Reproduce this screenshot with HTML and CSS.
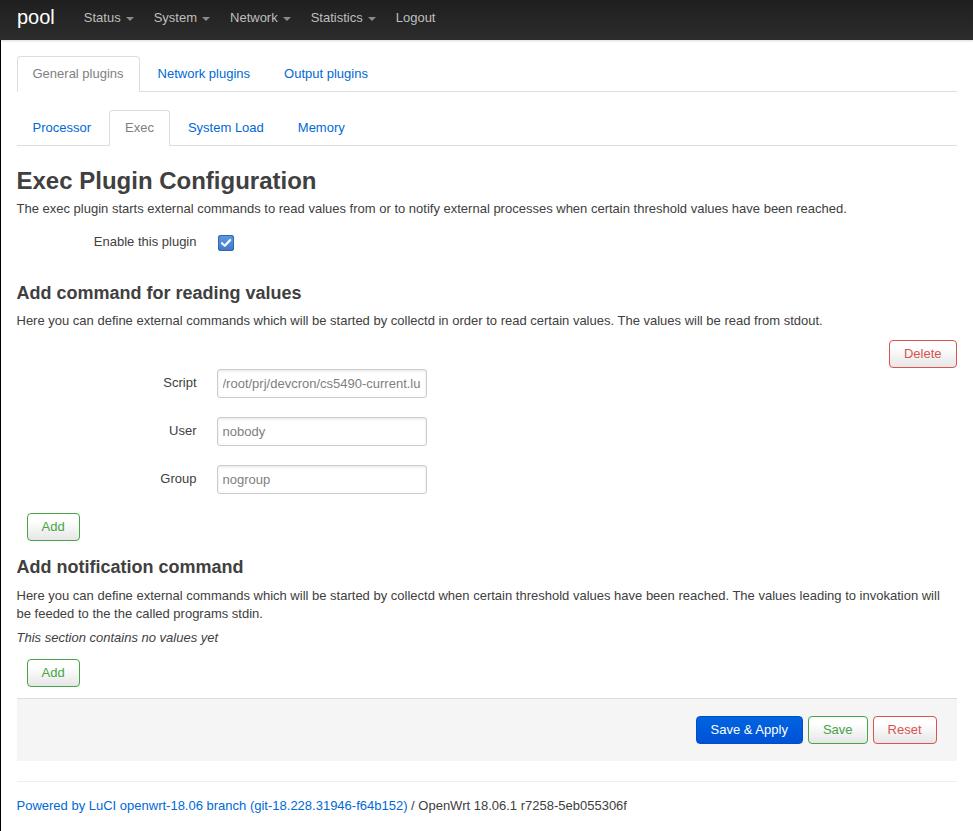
FILE: index.html
```html
<!DOCTYPE html>
<html lang="en">
<head>
<meta charset="utf-8">
<title>pool - Exec</title>
<link rel="stylesheet" href="styles.css">
</head>
<body>
<header class="topbar">
  <a class="brand" href="#">pool</a>
  <ul class="nav">
    <li><a href="#">Status<span class="caret"></span></a></li>
    <li><a href="#">System<span class="caret"></span></a></li>
    <li><a href="#">Network<span class="caret"></span></a></li>
    <li><a href="#">Statistics<span class="caret"></span></a></li>
    <li><a href="#">Logout</a></li>
  </ul>
</header>
<div class="container">
  <ul class="tabs tabs-main">
    <li class="active"><a href="#">General plugins</a></li>
    <li><a href="#">Network plugins</a></li>
    <li><a href="#">Output plugins</a></li>
  </ul>
  <ul class="tabs tabs-sub">
    <li><a href="#">Processor</a></li>
    <li class="active"><a href="#">Exec</a></li>
    <li><a href="#">System Load</a></li>
    <li><a href="#">Memory</a></li>
  </ul>

  <h2>Exec Plugin Configuration</h2>
  <p class="desc">The exec plugin starts external commands to read values from or to notify external processes when certain threshold values have been reached.</p>

  <div class="cbi-value enable-row">
    <label class="cbi-value-title">Enable this plugin</label>
    <div class="cbi-value-field">
      <span class="checkbox"><svg width="16" height="16" viewBox="0 0 16 16"><path d="M4 8.2 L6.8 10.8 L12.2 5.1" fill="none" stroke="#fff" stroke-width="2.2" stroke-linecap="round" stroke-linejoin="round"/></svg></span>
    </div>
  </div>

  <h3>Add command for reading values</h3>
  <p class="desc">Here you can define external commands which will be started by collectd in order to read certain values. The values will be read from stdout.</p>

  <div class="section-remove"><button class="btn btn-remove">Delete</button></div>

  <div class="cbi-value">
    <label class="cbi-value-title">Script</label>
    <div class="cbi-value-field"><input class="text" type="text" value="/root/prj/devcron/cs5490-current.lua"></div>
  </div>
  <div class="cbi-value">
    <label class="cbi-value-title">User</label>
    <div class="cbi-value-field"><input class="text" type="text" value="nobody"></div>
  </div>
  <div class="cbi-value last">
    <label class="cbi-value-title">Group</label>
    <div class="cbi-value-field"><input class="text" type="text" value="nogroup"></div>
  </div>

  <div class="section-create"><button class="btn btn-add">Add</button></div>

  <h3 class="h3-notify">Add notification command</h3>
  <p class="desc">Here you can define external commands which will be started by collectd when certain threshold values have been reached. The values leading to invokation will be feeded to the the called programs stdin.</p>
  <p class="empty"><em>This section contains no values yet</em></p>

  <div class="section-create second"><button class="btn btn-add">Add</button></div>

  <div class="actions">
    <button class="btn btn-primary">Save &amp; Apply</button>
    <button class="btn btn-save">Save</button>
    <button class="btn btn-reset">Reset</button>
  </div>

  <footer class="footer">
    <a href="#">Powered by LuCI openwrt-18.06 branch (git-18.228.31946-f64b152)</a> / OpenWrt 18.06.1 r7258-5eb055306f
  </footer>
</div>
</body>
</html>
```

FILE: styles.css
```css
html, body {
  margin: 0;
  padding: 0;
  background: #fff;
}
body {
  font-family: "Liberation Sans", Arial, Helvetica, sans-serif;
  font-size: 13px;
  line-height: 18px;
  color: #404040;
  min-height: 100vh;
  box-shadow: inset 1px 0 0 #000;
}
a {
  color: #0069d6;
  text-decoration: none;
}

/* top bar */
.topbar {
  box-sizing: border-box;
  height: 40px;
  padding-bottom: 4px;
  background: linear-gradient(#1f1f1f, #2c2c2c);
  display: flex;
  align-items: center;
  box-shadow: 0 1px 2px rgba(0,0,0,0.15);
}
.brand {
  color: #fff;
  font-size: 20px;
  line-height: 20px;
  padding: 0 19px 2px 17px;
}
.nav {
  display: flex;
  list-style: none;
  margin: 0;
  padding: 0;
}
.nav li a {
  display: flex;
  align-items: center;
  color: #bfbfbf;
  font-size: 13px;
  padding: 0 10px;
  line-height: 20px;
}
.caret {
  display: inline-block;
  width: 0;
  height: 0;
  margin-left: 5px;
  margin-top: 2px;
  border-top: 4px solid #8a8a8a;
  border-left: 4px solid transparent;
  border-right: 4px solid transparent;
}

/* container */
.container {
  width: 940px;
  margin: 0 auto;
}

/* tabs */
.tabs {
  list-style: none;
  margin: 0;
  padding: 0;
  display: flex;
  border-bottom: 1px solid #ddd;
}
.tabs-main { margin-top: 16px; }
.tabs-sub { margin-top: 18px; }
.tabs li {
  margin-right: 2px;
  margin-bottom: -1px;
}
.tabs li a {
  display: block;
  padding: 0 15px;
  line-height: 34px;
  border: 1px solid transparent;
  border-radius: 4px 4px 0 0;
}
.tabs li.active a {
  color: #808080;
  background: #fff;
  border-color: #ddd;
  border-bottom-color: #fff;
}

/* headings */
h2 {
  font-size: 24px;
  line-height: 36px;
  font-weight: bold;
  margin: 17px 0 1px;
  color: #404040;
}
h3 {
  font-size: 18px;
  line-height: 27px;
  font-weight: bold;
  margin: 22px 0 5px;
  color: #404040;
}
h3.h3-notify { margin-top: 13px; margin-bottom: 6px; }
.desc {
  margin: 0;
}
.empty {
  margin: 6px 0 0;
}

/* form rows */
.cbi-value {
  display: flex;
  margin-bottom: 19px;
}
.cbi-value.last { margin-bottom: 0; }
.cbi-value-title {
  width: 180px;
  text-align: right;
  padding-top: 5px;
  line-height: 18px;
  flex: none;
}
.cbi-value-field {
  margin-left: 20px;
}
.enable-row {
  margin-top: 10px;
  margin-bottom: 0;
  height: 30px;
}
.checkbox {
  display: block;
  width: 16px;
  height: 16px;
  margin-top: 7px;
  margin-left: 1px;
  border-radius: 3px;
  background: linear-gradient(#6099e0, #3f78c9);
  box-shadow: inset 0 0 0 1px #3265b0;
}
.checkbox svg { display: block; }
input.text {
  box-sizing: border-box;
  width: 210px;
  height: 29px;
  padding: 4px 5px;
  font-family: "Liberation Sans", Arial, sans-serif;
  font-size: 13px;
  color: #808080;
  border: 1px solid #ccc;
  border-radius: 3px;
  box-shadow: inset 0 1px 3px rgba(0,0,0,0.1);
  background: #fff;
}

/* buttons */
.btn {
  font-family: "Liberation Sans", Arial, sans-serif;
  font-size: 13px;
  line-height: 16px;
  padding: 5px 14px 5px;
  border-radius: 4px;
  border: 1px solid #ccc;
  background: linear-gradient(#fff, #fff 25%, #e6e6e6);
  color: #333;
  cursor: pointer;
  height: 28px;
  box-sizing: border-box;
}
.btn-remove, .btn-reset {
  border-color: #d9534f;
  color: #d9534f;
}
.btn-add, .btn-save {
  border-color: #46a546;
  color: #46a546;
}
.btn-primary {
  background: linear-gradient(#0064e0, #0052d6);
  border-color: #004dc7;
  color: #fff;
}
.section-remove {
  display: flex;
  justify-content: flex-end;
  margin-top: 10px;
  margin-bottom: 1px;
}
.section-create {
  padding-left: 10px;
  margin-top: 19px;
}
.section-create.second { margin-top: 12px; }

/* actions */
.actions {
  margin-top: 11px;
  background: #f5f5f5;
  border-top: 1px solid #ddd;
  padding: 17px 20px 17px;
  display: flex;
  justify-content: flex-end;
  gap: 5px;
}

/* footer */
.footer {
  margin-top: 20px;
  border-top: 1px solid #eee;
  padding-top: 15px;
  line-height: 18px;
}
```
